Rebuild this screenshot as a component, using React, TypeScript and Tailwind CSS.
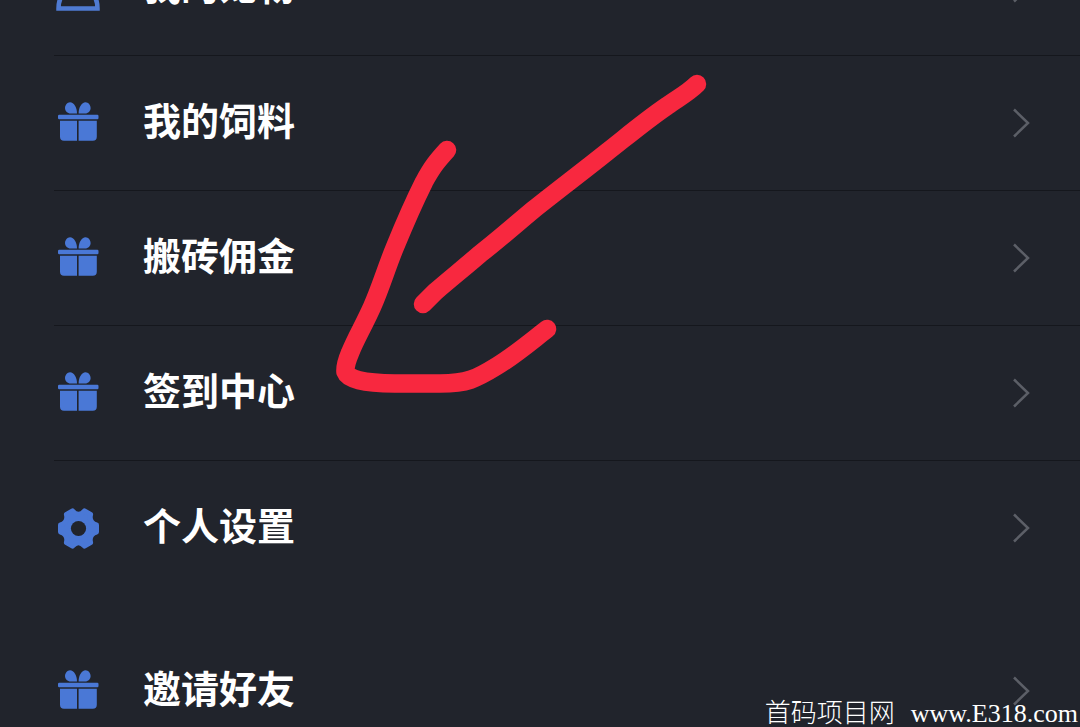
import type { ReactNode } from 'react';
import clsx from 'clsx';

interface MenuItem {
  label: string;
  icon: ReactNode;
  divider?: boolean;
}

const UserIcon = () => (
  <svg viewBox="0 0 44 48" className="h-12 w-11 shrink-0 text-[#4f7bd3]" fill="none" aria-hidden="true">
    <circle cx="22" cy="12" r="9" stroke="currentColor" strokeWidth="4" />
    <path d="M2.5 44.500h39C41.5 32 35 25.500 22 25.500S2.500 32 2.500 44.500Z" stroke="currentColor" strokeWidth="4.500" />
  </svg>
);

const GiftIcon = () => (
  <svg viewBox="0 0 44 44" className="h-11 w-11 shrink-0 text-[#4a78d6]" fill="currentColor" aria-hidden="true">
    <path d="M21 12.500h-6.500C11.500 12.500 9 10 9 7c0-3 2.300-5.800 5-5.800 4 0 7 5.300 7 11.300Z" />
    <path d="M22.600 12.500h6.500c3 0 5.500-2.500 5.500-5.500 0-3-2.300-5.800-5-5.800-4 0-7 5.300-7 11.300Z" />
    <rect x="2" y="13.800" width="40.500" height="4.400" rx="1.200" />
    <path d="M4 19.800h17v20H8a4 4 0 0 1-4-4v-16ZM22.600 19.800h18.200v16a4 4 0 0 1-4 4H22.600v-20Z" />
  </svg>
);

const GearIcon = () => (
  <svg viewBox="0 0 44 44" className="h-11 w-11 shrink-0 text-[#4a78d6]" aria-hidden="true">
    <g transform="translate(22.500 22.500)">
      <path
        d="M18-3.600V3.600Q10 5.800 12.100 14.200L6 17.700Q0 11-6 17.700L-12.100 14.200Q-10 5.800-18 3.600V-3.600Q-10-5.800-12.100-14.200L-6-17.700Q0-11 6-17.700L12.100-14.200Q10-5.800 18-3.600Z"
        fill="currentColor"
        stroke="currentColor"
        strokeWidth="5"
        strokeLinejoin="round"
      />
      <circle r="7.600" fill="#21242c" />
    </g>
  </svg>
);

const ChevronIcon = () => (
  <svg viewBox="0 0 18 30" className="h-[30px] w-[18px] shrink-0 text-[#5c5f67]" fill="none" aria-hidden="true">
    <path d="M2 1.500 16 15 2 28.500" stroke="currentColor" strokeWidth="2.500" />
  </svg>
);

const mainMenu: MenuItem[] = [
  { label: '我的宠物', icon: <UserIcon />, divider: true },
  { label: '我的饲料', icon: <GiftIcon />, divider: true },
  { label: '搬砖佣金', icon: <GiftIcon />, divider: true },
  { label: '签到中心', icon: <GiftIcon />, divider: true },
  { label: '个人设置', icon: <GearIcon /> },
];

const moreMenu: MenuItem[] = [{ label: '邀请好友', icon: <GiftIcon /> }];

const MenuList = ({ items }: { items: MenuItem[] }) => (
  <ul className="pl-[54px]">
    {items.map(({ label, icon, divider }) => (
      <li key={label}>
        <a
          href="#"
          className={clsx(
            'flex h-[135px] items-center border-b pr-[50px] pl-0.5',
            divider ? 'border-[#15171d]' : 'border-transparent',
          )}
        >
          {icon}
          <span className="ml-[43px] flex-1 pb-2 text-[38px] leading-[56px] font-bold text-white">{label}</span>
          <ChevronIcon />
        </a>
      </li>
    ))}
  </ul>
);

const ArrowMark = () => (
  <svg
    viewBox="0 0 400 350"
    className="pointer-events-none absolute top-[60px] left-[320px] h-[350px] w-[400px]"
    fill="none"
    stroke="#f8283f"
    strokeWidth="18.500"
    strokeLinecap="round"
    strokeLinejoin="round"
    aria-hidden="true"
  >
    <path d="M377 24C368 33 358 38 347 46C325 61 305 78 287 92C262 112 238 130 213 150C195 165 178 180 160 194C145 207 130 219 115 232L103 244" />
    <path d="M127 90C117 101 112 107 104 122C94 142 84 165 75 187C67 206 61 227 52 247C43 267 36 278 30 293C27 300 25 306 25.500 312C28 319 42 323 75 323.500H120C147 323.500 156 319 177 306C195 295 209 283 227 269" />
  </svg>
);

const Watermark = () => (
  <p className="pointer-events-none absolute right-0.5 bottom-0 flex items-baseline gap-4 text-white">
    <span className="text-[26px] leading-[26px] font-light">首码项目网</span>
    <span className="font-['Liberation_Serif',serif] text-[26px] leading-[26px]">www.E318.com</span>
  </p>
);

export default function App() {
  return (
    <main className="relative h-screen overflow-hidden bg-[#21242c] font-['Noto_Sans_CJK_SC',sans-serif]">
      {/* 列表已向上滚动,首行只露出底部 */}
      <div className="-mt-[79px] flex flex-col gap-7">
        <MenuList items={mainMenu} />
        <MenuList items={moreMenu} />
      </div>
      <ArrowMark />
      <Watermark />
    </main>
  );
}
